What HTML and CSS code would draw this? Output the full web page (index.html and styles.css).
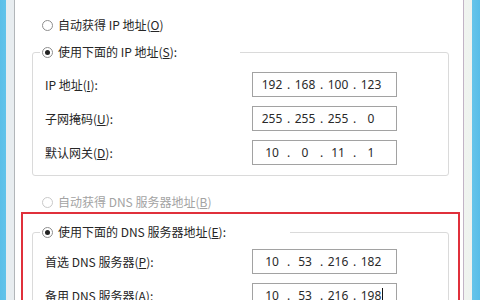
FILE: index.html
```html
<!DOCTYPE html>
<html lang="zh-CN">
<head>
<meta charset="utf-8">
<title>IPv4 属性</title>
<link rel="stylesheet" href="styles.css">
</head>
<body>
<div class="frame">
  <div class="edge-left"></div>
  <div class="content">
    <div class="radio-row first">
      <span class="radio"></span><span>自动获得 IP 地址(<u>O</u>)</span>
    </div>
    <fieldset class="group">
      <legend class="legend-ip"><span class="radio checked"></span><span>使用下面的 IP 地址(<u>S</u>):</span></legend>
      <div class="row">
        <span class="label">IP 地址(<u>I</u>):</span>
        <div class="ipbox"><span class="f">192</span><span class="d">.</span><span class="f">168</span><span class="d">.</span><span class="f">100</span><span class="d">.</span><span class="f">123</span></div>
      </div>
      <div class="row">
        <span class="label">子网掩码(<u>U</u>):</span>
        <div class="ipbox"><span class="f">255</span><span class="d">.</span><span class="f">255</span><span class="d">.</span><span class="f">255</span><span class="d">.</span><span class="f">0</span></div>
      </div>
      <div class="row">
        <span class="label">默认网关(<u>D</u>):</span>
        <div class="ipbox"><span class="f">10</span><span class="d">.</span><span class="f">0</span><span class="d">.</span><span class="f">11</span><span class="d">.</span><span class="f">1</span></div>
      </div>
    </fieldset>
    <div class="radio-row disabled">
      <span class="radio"></span><span>自动获得 DNS 服务器地址(<u>B</u>)</span>
    </div>
    <div class="highlight">
      <fieldset class="group dns">
        <legend class="legend-dns"><span class="radio checked"></span><span>使用下面的 DNS 服务器地址(<u>E</u>):</span></legend>
        <div class="row">
          <span class="label">首选 DNS 服务器(<u>P</u>):</span>
          <div class="ipbox"><span class="f">10</span><span class="d">.</span><span class="f">53</span><span class="d">.</span><span class="f">216</span><span class="d">.</span><span class="f">182</span></div>
        </div>
        <div class="row">
          <span class="label">备用 DNS 服务器(<u>A</u>):</span>
          <div class="ipbox"><span class="f">10</span><span class="d">.</span><span class="f">53</span><span class="d">.</span><span class="f">216</span><span class="d">.</span><span class="f">198<span class="caret"></span></span></div>
        </div>
      </fieldset>
    </div>
  </div>
  <div class="edge-right"></div>
</div>
</body>
</html>
```
FILE: styles.css
```css
* { box-sizing: border-box; }
html, body { margin: 0; padding: 0; background: #ffffff; }
body {
  font-family: "Noto Sans CJK SC", "Noto Sans", sans-serif;
  font-size: 12px;
  line-height: 16px;
  color: #262626;
}
u { text-decoration: underline; text-underline-offset: 1px; }

.frame {
  display: flex;
  width: 480px;
  height: 300px;
  overflow: hidden;
}
.edge-left {
  width: 15px;
  flex: none;
  background: linear-gradient(to right, #5bbfe8 0, #62c3ea 6px, #e8edf0 6px, #e8edf0 14px, #b2b6b9 14px, #b2b6b9 15px);
}
.edge-right {
  width: 17px;
  flex: none;
  background: linear-gradient(to right, #c2b4c6 0, #c2b4c6 1px, #f0f4f0 1px, #eef3ef 9px, #66c4ea 9px, #58bde8 17px);
}
.content {
  flex: 1;
  padding-top: 17px;
  min-width: 0;
}

.radio-row {
  display: flex;
  align-items: center;
  height: 16px;
  padding-left: 27px;
}
.radio-row.disabled { margin-top: 18px; color: #a3a3a3; }

.radio {
  width: 11px;
  height: 11px;
  border: 1px solid #8e8e8e;
  border-radius: 50%;
  background: #fff;
  margin-right: 5px;
  flex: none;
  display: inline-flex;
  align-items: center;
  justify-content: center;
}
.radio.checked::after {
  content: "";
  width: 5px;
  height: 5px;
  border-radius: 50%;
  background: #222;
}
.disabled .radio { border-color: #c9c9c9; }

.group {
  margin: 11px 14px 0 17px;
  border: 1px solid #dadada;
  border-radius: 3px;
  padding: 12px 0 10px 7px;
  min-width: 0;
}
.group legend {
  display: flex;
  align-items: center;
  height: 16px;
  padding: 0 0 0 2px;
  margin: 0;
}
.legend-ip { width: 200px; }
.legend-dns { width: 250px; }

.row {
  display: flex;
  align-items: center;
  height: 25px;
  padding-left: 5px;
}
.row + .row { margin-top: 9px; }
.label { width: 207px; flex: none; }

.ipbox {
  width: 145px;
  height: 25px;
  border: 1px solid #a2a2a2;
  background: #fff;
  display: flex;
  align-items: center;
  padding-left: 6px;
  font-family: "Noto Sans", "DejaVu Sans", sans-serif;
  font-size: 12px;
  color: #2a2a2a;
}
.ipbox .f { width: 26px; text-align: center; position: relative; }
.ipbox .d { width: 7px; text-align: center; }
.caret {
  position: absolute;
  right: 1px;
  top: 0;
  width: 1px;
  height: 16px;
  background: #111;
}

.highlight {
  margin: 2px 3px 0 6px;
  border: 2px solid #e0303b;
  border-bottom: none;
  padding: 10px 9px 0 9px;
}
.group.dns { margin: 0; padding-top: 9px; }
```
